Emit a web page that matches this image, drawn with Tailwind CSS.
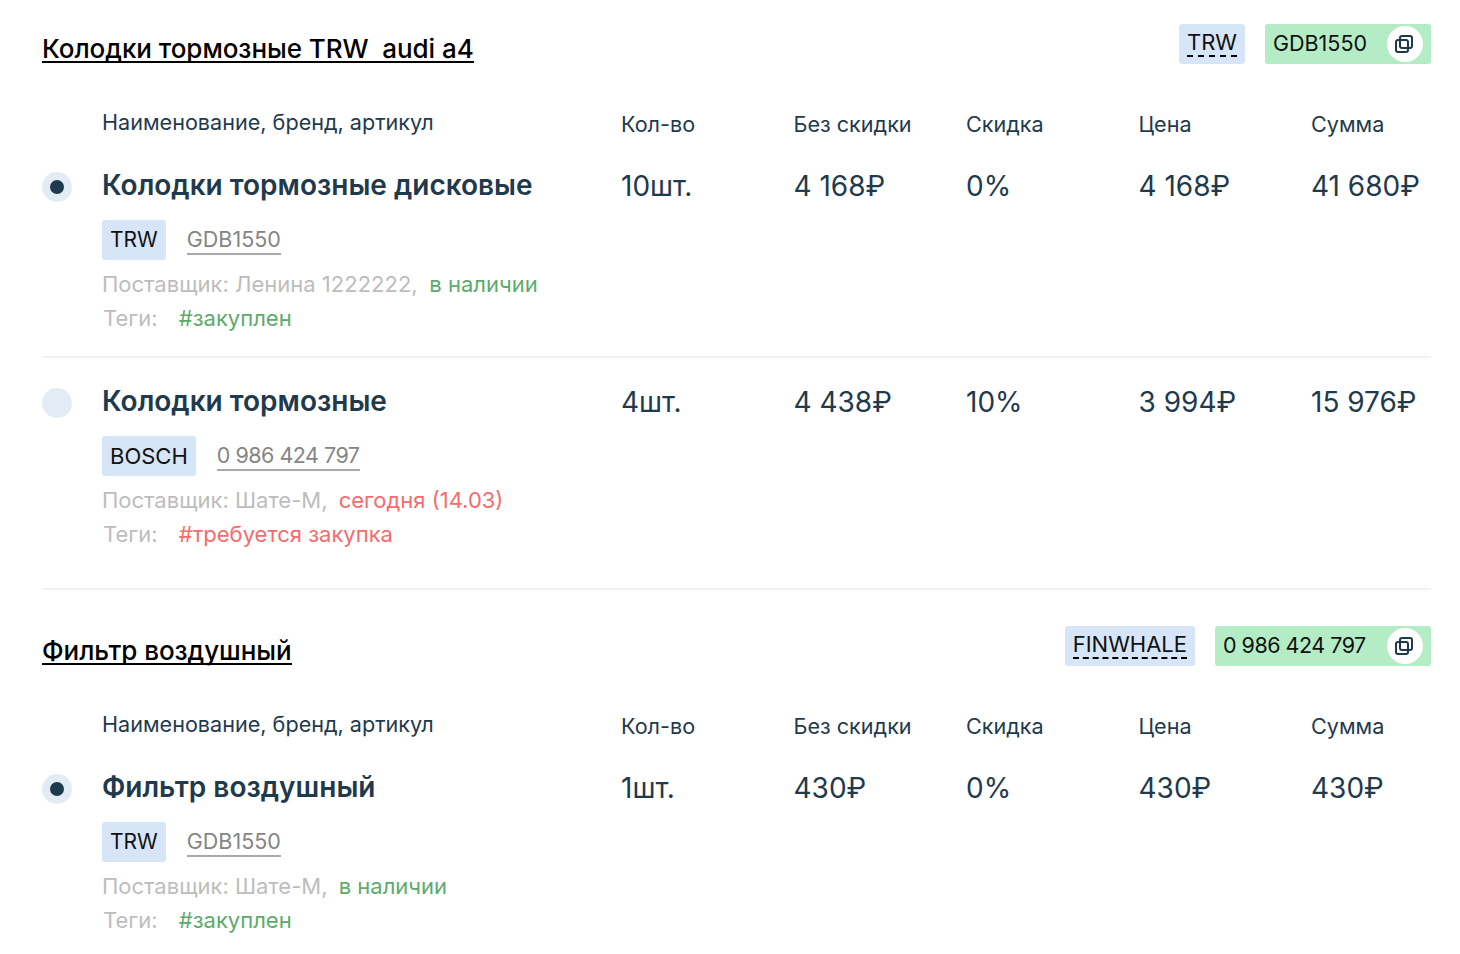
<!DOCTYPE html>
<html lang="ru">
<head>
    <meta charset="UTF-8">
    <title>Заказ</title>
    <script src="https://cdn.jsdelivr.net/npm/@tailwindcss/browser@4"></script>
</head>
<body class="bg-white font-['Inter',sans-serif] text-[#1f3a4d] overflow-hidden">
<div class="w-[1460px] h-[954px] pl-[42px] pr-[29px] pt-[24px]">

    <!-- первая группа -->
    <div class="flex items-start justify-between h-[40px]">
        <h2 class="mt-[12px] text-[26px] tracking-[-0.05px] leading-[25px] font-medium text-black border-b-2 border-black">Колодки тормозные TRW&nbsp; audi a4</h2>
        <div class="flex gap-[20px]">
            <div class="h-[40px] px-[8px] flex items-center bg-[#d6e6f8] rounded-[3px] text-[22px] text-[#111]"><span class="border-b-2 border-dashed border-black leading-[25px] -mt-[1px]">TRW</span></div>
            <div class="h-[40px] w-[166px] pl-[8px] pr-[8px] flex items-center justify-between bg-[#b4edc5] rounded-[3px] text-[21.5px] text-[#111]">
                <span class="-mt-[2px]">GDB1550</span>
                <span class="w-[36px] h-[36px] rounded-full bg-white flex items-center justify-center">
                    <svg class="w-[18px] h-[18px] mr-[2px]" viewBox="0 0 18 18" fill="none" stroke="#1f3a4d" stroke-width="2"><rect x="5" y="1" width="12" height="12" rx="2"/><rect x="1" y="5" width="12" height="12" rx="2"/></svg>
                </span>
            </div>
        </div>
    </div>

    <div class="grid grid-cols-[60px_519px_172.5px_172.5px_172.5px_172.5px_1fr] mt-[45px] text-[21.6px] leading-[30px]">
        <div></div>
        <div class="-mt-[2px]">Наименование, бренд, артикул</div>
        <div>Кол-во</div><div>Без скидки</div><div>Скидка</div><div>Цена</div><div>Сумма</div>
    </div>

    <div class="grid grid-cols-[60px_519px_172.5px_172.5px_172.5px_172.5px_1fr] mt-[31px] h-[188px] border-b-2 border-[#f2f2f2] text-[28px] leading-[32px]">
        <div class="pt-[2px]"><span class="w-[30px] h-[30px] rounded-full bg-[#e3ebf5] flex items-center justify-center"><span class="w-[14px] h-[14px] rounded-full bg-[#1f3a4d]"></span></span></div>
        <div>
            <div class="font-semibold -mt-[1px]">Колодки тормозные дисковые</div>
            <div class="flex items-center gap-[21px] mt-[19px] text-[21.5px] leading-[26px]">
                <span class="h-[40px] px-[8px] flex items-center bg-[#d6e6f8] rounded-[3px] text-[#111] text-[21px]">TRW</span>
                <span class="text-[#858585] border-b-2 border-[#a8a8a8] pb-[1px]">GDB1550</span>
            </div>
            <div class="mt-[7px] text-[22px] leading-[34px] text-[#bdbdbd]">Поставщик: Ленина 1222222, <span class="ml-[5.5px] text-[#5cab6c]">в наличии</span></div>
            <div class="text-[22px] leading-[34px] text-[#bdbdbd]"><span class="ml-[1px]">Теги:</span> <span class="ml-[15px] text-[#5cab6c]">#закуплен</span></div>
        </div>
        <div>10шт.</div><div>4 168₽</div><div>0%</div><div>4 168₽</div><div>41 680₽</div>
    </div>

    <div class="grid grid-cols-[60px_519px_172.5px_172.5px_172.5px_172.5px_1fr] pt-[28px] h-[232px] border-b-2 border-[#f2f2f2] text-[28px] leading-[32px]">
        <div class="pt-[2px]"><span class="block w-[30px] h-[30px] rounded-full bg-[#e3ebf5]"></span></div>
        <div>
            <div class="font-semibold -mt-[1px]">Колодки тормозные</div>
            <div class="flex items-center gap-[21px] mt-[19px] text-[22px] leading-[26px]">
                <span class="h-[40px] px-[8px] flex items-center bg-[#d6e6f8] rounded-[3px] text-[#111]">BOSCH</span>
                <span class="text-[#858585] border-b-2 border-[#a8a8a8] pb-[1px] text-[21.5px] tracking-[-0.5px] w-[143px]">0 986 424 797</span>
            </div>
            <div class="mt-[7px] text-[22px] leading-[34px] text-[#bdbdbd]">Поставщик: Шате-М, <span class="ml-[5px] text-[#f56c6c]">сегодня (14.03)</span></div>
            <div class="text-[22px] leading-[34px] text-[#bdbdbd]"><span class="ml-[1px]">Теги:</span> <span class="ml-[15px] text-[#f56c6c]">#требуется закупка</span></div>
        </div>
        <div>4шт.</div><div>4 438₽</div><div>10%</div><div>3 994₽</div><div>15 976₽</div>
    </div>

    <!-- вторая группа -->
    <div class="flex items-start justify-between h-[40px] mt-[36px]">
        <h2 class="mt-[12px] text-[26px] tracking-[-0.05px] leading-[25px] font-medium text-black border-b-2 border-black">Фильтр воздушный</h2>
        <div class="flex gap-[20px]">
            <div class="h-[40px] px-[8px] flex items-center bg-[#d6e6f8] rounded-[3px] text-[22px] text-[#111]"><span class="border-b-2 border-dashed border-black leading-[25px] -mt-[1px]">FINWHALE</span></div>
            <div class="h-[40px] w-[216px] pl-[8px] pr-[8px] flex items-center justify-between bg-[#b4edc5] rounded-[3px] text-[21.5px] text-[#111]">
                <span class="-mt-[2px] tracking-[-0.5px]">0 986 424 797</span>
                <span class="w-[36px] h-[36px] rounded-full bg-white flex items-center justify-center">
                    <svg class="w-[18px] h-[18px] mr-[2px]" viewBox="0 0 18 18" fill="none" stroke="#1f3a4d" stroke-width="2"><rect x="5" y="1" width="12" height="12" rx="2"/><rect x="1" y="5" width="12" height="12" rx="2"/></svg>
                </span>
            </div>
        </div>
    </div>

    <div class="grid grid-cols-[60px_519px_172.5px_172.5px_172.5px_172.5px_1fr] mt-[45px] text-[21.6px] leading-[30px]">
        <div></div>
        <div class="-mt-[2px]">Наименование, бренд, артикул</div>
        <div>Кол-во</div><div>Без скидки</div><div>Скидка</div><div>Цена</div><div>Сумма</div>
    </div>

    <div class="grid grid-cols-[60px_519px_172.5px_172.5px_172.5px_172.5px_1fr] mt-[31px] text-[28px] leading-[32px]">
        <div class="pt-[2px]"><span class="w-[30px] h-[30px] rounded-full bg-[#e3ebf5] flex items-center justify-center"><span class="w-[14px] h-[14px] rounded-full bg-[#1f3a4d]"></span></span></div>
        <div>
            <div class="font-semibold -mt-[1px]">Фильтр воздушный</div>
            <div class="flex items-center gap-[21px] mt-[19px] text-[21.5px] leading-[26px]">
                <span class="h-[40px] px-[8px] flex items-center bg-[#d6e6f8] rounded-[3px] text-[#111] text-[21px]">TRW</span>
                <span class="text-[#858585] border-b-2 border-[#a8a8a8] pb-[1px]">GDB1550</span>
            </div>
            <div class="mt-[7px] text-[22px] leading-[34px] text-[#bdbdbd]">Поставщик: Шате-М, <span class="ml-[5px] text-[#5cab6c]">в наличии</span></div>
            <div class="text-[22px] leading-[34px] text-[#bdbdbd]"><span class="ml-[1px]">Теги:</span> <span class="ml-[15px] text-[#5cab6c]">#закуплен</span></div>
        </div>
        <div>1шт.</div><div>430₽</div><div>0%</div><div>430₽</div><div>430₽</div>
    </div>

</div>
</body>
</html>
